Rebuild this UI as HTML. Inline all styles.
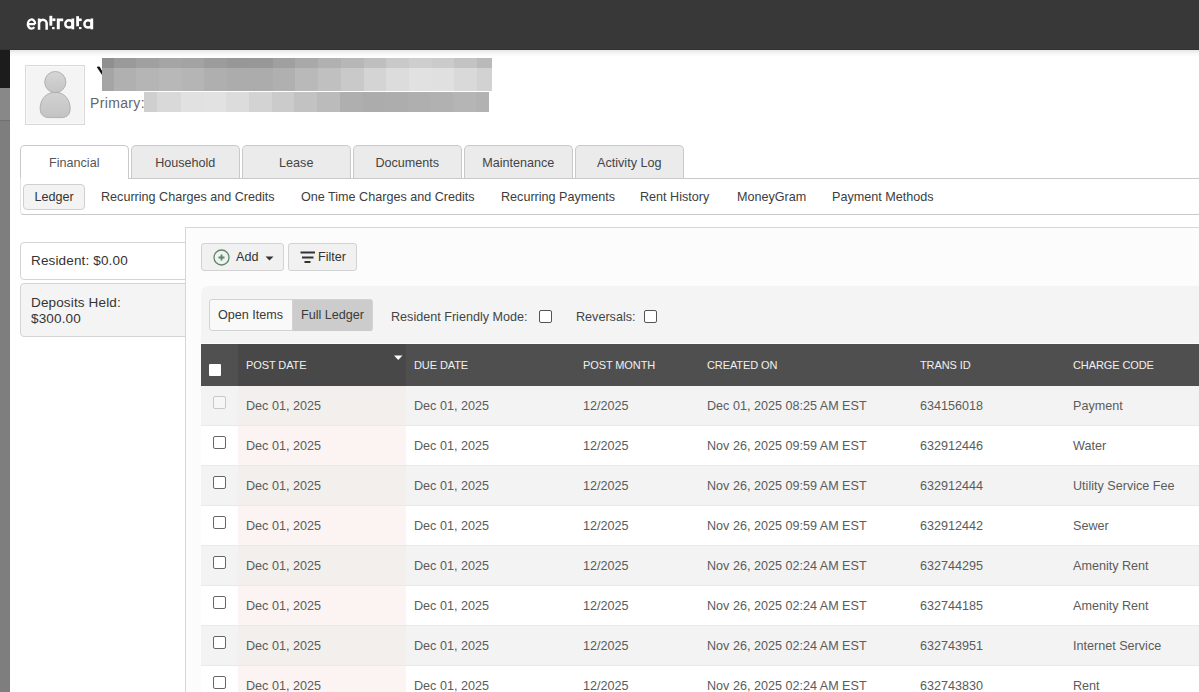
<!DOCTYPE html>
<html><head><meta charset="utf-8">
<style>
*{box-sizing:border-box;margin:0;padding:0}
html,body{width:1199px;height:692px;overflow:hidden;background:#fff;font-family:"Liberation Sans",sans-serif;color:#444}
.a{position:absolute}
#top{left:0;top:0;width:1199px;height:50px;background:#383838;border-bottom:1px solid #323232}
#strip1{left:0;top:50px;width:10px;height:38px;background:#1c1c1c}
#strip2{left:0;top:88px;width:10px;height:32px;background:#888}
#strip3{left:0;top:120px;width:10px;height:572px;background:#7e7e7e;border-top:1px solid #707070}
#panel{left:10px;top:50px;width:1189px;height:642px;background:#fff;background-image:linear-gradient(rgba(0,0,0,.1),rgba(0,0,0,.04) 3px,rgba(0,0,0,0) 7px)}
#avatar{left:25px;top:65px;width:60px;height:60px;background:#f4f4f4;border:1px solid #d9d9d9;box-shadow:inset 0 0 0 1px #f9f9f9}
.t{white-space:nowrap;font-size:12.6px;line-height:15px}
.tab{top:145px;height:34px;width:108.5px;background:#ebebeb;border:1px solid #c9c9c9;border-bottom:none;border-radius:5px 5px 0 0;text-align:center;font-size:12.6px;line-height:35px;color:#444}
.tab.act{background:#fff;color:#555;height:34px}
#subnav{left:20px;top:178px;width:1190px;height:37px;border-top:none;border-bottom:1px solid #c9c9c9;border-left:1px solid #e3e3e3;border-radius:0 0 0 4px}
#ledger{left:23px;top:184px;width:62px;height:26px;background:#f3f3f3;border:1px solid #cfcfcf;border-radius:4px;text-align:center;font-size:12.6px;line-height:24px;color:#333}
.sn{top:190px;font-size:12.6px;color:#3d3d3d}
.sum{left:20px;width:170px;border:1px solid #d4d4d4;border-radius:4px;font-size:13.5px;letter-spacing:.15px;color:#333;padding-left:10px}
#main{left:185px;top:227px;width:1020px;height:470px;background:#fcfcfc;border-left:1px solid #d6d6d6;border-top:1px solid #d6d6d6}
.btn{top:243px;height:28px;background:#f1f1f1;border:1px solid #d2d2d2;border-radius:3px;font-size:12.6px;color:#333}
#fbar{left:201px;top:286px;width:1010px;height:57px;background:#f4f4f4;border-radius:8px 0 0 0}
#seg{left:209px;top:299px;width:164px;height:32px;border:1px solid #d3d3d3;border-radius:3px;background:#f9f9f9;overflow:hidden}
#thead{left:201px;top:344px;width:1000px;height:42px;background:#4f4f4f}
.th{top:359px;font-size:11px;line-height:13px;color:#f0f0f0;letter-spacing:-0.1px;white-space:nowrap}
.row{left:201px;width:1000px;height:40px}
.td{font-size:12.6px;line-height:15px;color:#5b5b5b;white-space:nowrap}
.cb.dis{border-color:#c8c8c8;background:#f6f6f6}
.cb{width:13px;height:13px;border:1px solid #666;border-radius:2px;background:#fff}
</style></head><body>
<div class="a" id="top"></div>
<div class="a" id="strip1"></div>
<div class="a" id="strip2"></div>
<div class="a" id="strip3"></div>
<div class="a" id="panel"></div>
<div class="a" id="avatar"></div>
<svg class="a" style="left:90px;top:60px" width="14" height="20" viewBox="90 60 14 20"><path d="M96.9 67.3Q97.3 66.5 98.3 66.6L99.7 66.8L102.2 71.3L102.2 74.5L101.7 74.6Z" fill="#111"/></svg>
<div class="a" style="left:102px;top:58px;width:12px;height:10px;background:#8f8f8f"></div>
<div class="a" style="left:102px;top:68px;width:12px;height:23px;background:#a5a5a5"></div>
<div class="a" style="left:114px;top:58px;width:22px;height:10px;background:#9a9a9a"></div>
<div class="a" style="left:114px;top:68px;width:22px;height:23px;background:#b0b0b0"></div>
<div class="a" style="left:136px;top:58px;width:23px;height:10px;background:#a0a0a0"></div>
<div class="a" style="left:136px;top:68px;width:23px;height:23px;background:#b5b5b5"></div>
<div class="a" style="left:159px;top:58px;width:23px;height:10px;background:#a5a5a5"></div>
<div class="a" style="left:159px;top:68px;width:23px;height:23px;background:#b8b8b8"></div>
<div class="a" style="left:182px;top:58px;width:22px;height:10px;background:#a3a3a3"></div>
<div class="a" style="left:182px;top:68px;width:22px;height:23px;background:#b5b5b5"></div>
<div class="a" style="left:204px;top:58px;width:23px;height:10px;background:#9c9c9c"></div>
<div class="a" style="left:204px;top:68px;width:23px;height:23px;background:#afafaf"></div>
<div class="a" style="left:227px;top:58px;width:23px;height:10px;background:#979797"></div>
<div class="a" style="left:227px;top:68px;width:23px;height:23px;background:#acacac"></div>
<div class="a" style="left:250px;top:58px;width:23px;height:10px;background:#989898"></div>
<div class="a" style="left:250px;top:68px;width:23px;height:23px;background:#acacac"></div>
<div class="a" style="left:273px;top:58px;width:22px;height:10px;background:#a0a0a0"></div>
<div class="a" style="left:273px;top:68px;width:22px;height:23px;background:#b0b0b0"></div>
<div class="a" style="left:295px;top:58px;width:23px;height:10px;background:#a9a9a9"></div>
<div class="a" style="left:295px;top:68px;width:23px;height:23px;background:#b9b9b9"></div>
<div class="a" style="left:318px;top:58px;width:23px;height:10px;background:#b1b1b1"></div>
<div class="a" style="left:318px;top:68px;width:23px;height:23px;background:#c0c0c0"></div>
<div class="a" style="left:341px;top:58px;width:23px;height:10px;background:#b7b7b7"></div>
<div class="a" style="left:341px;top:68px;width:23px;height:23px;background:#c9c9c9"></div>
<div class="a" style="left:364px;top:58px;width:22px;height:10px;background:#bfbfbf"></div>
<div class="a" style="left:364px;top:68px;width:22px;height:23px;background:#d4d4d4"></div>
<div class="a" style="left:386px;top:58px;width:23px;height:10px;background:#c9c9c9"></div>
<div class="a" style="left:386px;top:68px;width:23px;height:23px;background:#dcdcdc"></div>
<div class="a" style="left:409px;top:58px;width:23px;height:10px;background:#cecece"></div>
<div class="a" style="left:409px;top:68px;width:23px;height:23px;background:#e1e1e1"></div>
<div class="a" style="left:432px;top:58px;width:22px;height:10px;background:#cbcbcb"></div>
<div class="a" style="left:432px;top:68px;width:22px;height:23px;background:#e0e0e0"></div>
<div class="a" style="left:454px;top:58px;width:23px;height:10px;background:#c3c3c3"></div>
<div class="a" style="left:454px;top:68px;width:23px;height:23px;background:#d9d9d9"></div>
<div class="a" style="left:477px;top:58px;width:15px;height:10px;background:#bababa"></div>
<div class="a" style="left:477px;top:68px;width:15px;height:23px;background:#d2d2d2"></div>
<div class="a" style="left:144px;top:92px;width:13px;height:20px;background:#cfcfcf"></div>
<div class="a" style="left:157px;top:92px;width:24px;height:20px;background:#d9d9d9"></div>
<div class="a" style="left:181px;top:92px;width:22px;height:20px;background:#e1e1e1"></div>
<div class="a" style="left:203px;top:92px;width:23px;height:20px;background:#e2e2e2"></div>
<div class="a" style="left:226px;top:92px;width:23px;height:20px;background:#dcdcdc"></div>
<div class="a" style="left:249px;top:92px;width:23px;height:20px;background:#d3d3d3"></div>
<div class="a" style="left:272px;top:92px;width:22px;height:20px;background:#cbcbcb"></div>
<div class="a" style="left:294px;top:92px;width:23px;height:20px;background:#c2c2c2"></div>
<div class="a" style="left:317px;top:92px;width:23px;height:20px;background:#bbbbbb"></div>
<div class="a" style="left:340px;top:92px;width:22px;height:20px;background:#afafaf"></div>
<div class="a" style="left:362px;top:92px;width:23px;height:20px;background:#acacac"></div>
<div class="a" style="left:385px;top:92px;width:23px;height:20px;background:#adadad"></div>
<div class="a" style="left:408px;top:92px;width:22px;height:20px;background:#afafaf"></div>
<div class="a" style="left:430px;top:92px;width:23px;height:20px;background:#b1b1b1"></div>
<div class="a" style="left:453px;top:92px;width:23px;height:20px;background:#b5b5b5"></div>
<div class="a" style="left:476px;top:92px;width:13px;height:20px;background:#b2b2b2"></div>
<div class="a" style="left:90px;top:95px;font-size:14px;line-height:16px;letter-spacing:.35px;color:#666;white-space:nowrap">Primary:</div>
<svg class="a" style="left:0;top:0" width="100" height="50" viewBox="0 0 100 50"><g fill="#fff">
<path d="M27.9 24.2H35.2M35.2 24.1A3.7 4.6 0 1 0 34.33 27.06" fill="none" stroke="#fff" stroke-width="2.2"/>
<path d="M39.05 29.8V18.6M39.05 29.8V23.6A3.8 3.9 0 0 1 46.65 23.6V29.8" fill="none" stroke="#fff" stroke-width="2.5"/>
<rect x="49.4" y="15.8" width="2.9" height="9.9"/><rect x="52.3" y="18.4" width="3.1" height="2.7"/><rect x="52.1" y="27" width="2.5" height="2.2"/>
<path d="M56.8 29.3V18.5H63.2V21.2H59.8V29.3Z"/>
<circle cx="69" cy="23.9" r="3.7" fill="none" stroke="#fff" stroke-width="2.5"/><rect x="71.4" y="18.5" width="2.8" height="10.8"/>
<rect x="76.2" y="16.2" width="2.8" height="10.1"/><rect x="79" y="18.5" width="2.7" height="2.6"/><rect x="79" y="27" width="2.5" height="2.1"/>
<circle cx="88.1" cy="23.9" r="3.7" fill="none" stroke="#fff" stroke-width="2.5"/><rect x="90.4" y="18.5" width="2.8" height="10.8"/>
</g></svg>
<svg class="a" style="left:25px;top:65px" width="60" height="60" viewBox="0 0 60 60">
<defs><linearGradient id="gh" x1="0" y1="0" x2="0" y2="1"><stop offset="0" stop-color="#d6d6d6"/><stop offset="1" stop-color="#c4c4c4"/></linearGradient>
<linearGradient id="gb" x1="0" y1="0" x2="0" y2="1"><stop offset="0" stop-color="#d2d2d2"/><stop offset="1" stop-color="#c3c3c3"/></linearGradient></defs>
<path d="M30.2 27.2C38 27.2 44.5 33 45.1 42C45.5 48 43.5 52.6 36 52.6H24.5C17 52.6 14.8 48 15.2 42C15.8 33 22.4 27.2 30.2 27.2Z" fill="url(#gb)" stroke="#ababab" stroke-width="0.9"/>
<circle cx="30.3" cy="17.1" r="10.6" fill="url(#gh)" stroke="#acacac" stroke-width="0.9"/>
</svg>

<div class="a tab act" style="left:20px">Financial</div>
<div class="a tab" style="left:131px">Household</div>
<div class="a tab" style="left:242px">Lease</div>
<div class="a tab" style="left:353px">Documents</div>
<div class="a tab" style="left:464px">Maintenance</div>
<div class="a tab" style="left:575px">Activity Log</div>

<div class="a" id="subnav"></div>
<div class="a" style="left:128px;top:178px;width:1071px;height:1px;background:#c9c9c9"></div>
<div class="a" id="ledger">Ledger</div>
<div class="a sn t" style="left:101px">Recurring Charges and Credits</div>
<div class="a sn t" style="left:301px">One Time Charges and Credits</div>
<div class="a sn t" style="left:501px">Recurring Payments</div>
<div class="a sn t" style="left:640px">Rent History</div>
<div class="a sn t" style="left:737px">MoneyGram</div>
<div class="a sn t" style="left:832px">Payment Methods</div>

<div class="a sum" style="top:242px;height:38px;line-height:36px;background:#fff">Resident: $0.00</div>
<div class="a sum" style="top:283px;height:54px;background:#f4f4f4;padding-top:11px;line-height:16px">Deposits Held:<br>$300.00</div>

<div class="a" id="main"></div>
<div class="a btn" style="left:201px;width:83px"></div>
<div class="a btn" style="left:288px;width:69px"></div>
<div class="a" id="fbar"></div>
<div class="a" id="seg"></div>
<div class="a" id="thead"></div>

<!-- buttons -->
<svg class="a" style="left:213px;top:249.3px" width="17" height="17" viewBox="0 0 17 17"><circle cx="8.5" cy="8.5" r="7.5" fill="none" stroke="#5b8a6b" stroke-width="1.3"/><path d="M8.5 5.5v6M5.5 8.5h6" stroke="#5b8a6b" stroke-width="1.8"/></svg>
<div class="a t" style="left:236px;top:250px;color:#333">Add</div>
<svg class="a" style="left:264.5px;top:256px" width="9" height="5" viewBox="0 0 9 5"><path d="M0.5 0.5h8L4.5 4.5z" fill="#333"/></svg>
<svg class="a" style="left:300px;top:250px" width="16" height="15" viewBox="0 0 16 15"><path d="M0.5 2.5h14.5M2 7.5h11.5M4.5 12h6" stroke="#333" stroke-width="1.8"/></svg>
<div class="a t" style="left:318px;top:250px;color:#333">Filter</div>

<div class="a" style="left:292px;top:300px;width:80px;height:31px;background:#cccccc"></div>
<div class="a" style="left:292px;top:300px;width:1px;height:31px;background:#d3d3d3"></div>
<div class="a t" style="left:218px;top:308px;color:#3a3a3a">Open Items</div>
<div class="a t" style="left:301px;top:308px;color:#3a3a3a">Full Ledger</div>
<div class="a t" style="left:391px;top:310px;color:#444">Resident Friendly Mode:</div>
<div class="a cb" style="left:539px;top:310px;border-color:#555"></div>
<div class="a t" style="left:576px;top:310px;color:#444">Reversals:</div>
<div class="a cb" style="left:644px;top:310px;border-color:#555"></div>

<div class="a" style="left:201px;top:344px;width:37px;height:42px;background:#505050"></div>
<div class="a" style="left:238px;top:344px;width:168px;height:42px;background:#484848"></div>
<div class="a" style="left:209px;top:364px;width:12px;height:12px;background:#fff;border-radius:1px"></div>
<svg class="a" style="left:394px;top:355px" width="9" height="6" viewBox="0 0 9 6"><path d="M0 0.5h8.5L4.25 5z" fill="#fff"/></svg>
<div class="a th" style="left:246px">POST DATE</div>
<div class="a th" style="left:414px">DUE DATE</div>
<div class="a th" style="left:583px">POST MONTH</div>
<div class="a th" style="left:707px">CREATED ON</div>
<div class="a th" style="left:920px">TRANS ID</div>
<div class="a th" style="left:1073px">CHARGE CODE</div>
<div class="a row" style="top:386px;background:#f3f3f3"></div>
<div class="a" style="left:238px;top:386px;width:168px;height:40px;background:#f3efec"></div>
<div class="a cb dis" style="left:213px;top:396px"></div>
<div class="a td" style="left:246px;top:399px">Dec 01, 2025</div>
<div class="a td" style="left:414px;top:399px">Dec 01, 2025</div>
<div class="a td" style="left:583px;top:399px">12/2025</div>
<div class="a td" style="left:707px;top:399px">Dec 01, 2025 08:25 AM EST</div>
<div class="a td" style="left:920px;top:399px">634156018</div>
<div class="a td" style="left:1073px;top:399px">Payment</div>
<div class="a row" style="top:426px;background:#ffffff"></div>
<div class="a" style="left:238px;top:426px;width:168px;height:40px;background:#fcf4f2"></div>
<div class="a cb" style="left:213px;top:436px"></div>
<div class="a td" style="left:246px;top:439px">Dec 01, 2025</div>
<div class="a td" style="left:414px;top:439px">Dec 01, 2025</div>
<div class="a td" style="left:583px;top:439px">12/2025</div>
<div class="a td" style="left:707px;top:439px">Nov 26, 2025 09:59 AM EST</div>
<div class="a td" style="left:920px;top:439px">632912446</div>
<div class="a td" style="left:1073px;top:439px">Water</div>
<div class="a row" style="top:466px;background:#f3f3f3"></div>
<div class="a" style="left:238px;top:466px;width:168px;height:40px;background:#f3efec"></div>
<div class="a cb" style="left:213px;top:476px"></div>
<div class="a td" style="left:246px;top:479px">Dec 01, 2025</div>
<div class="a td" style="left:414px;top:479px">Dec 01, 2025</div>
<div class="a td" style="left:583px;top:479px">12/2025</div>
<div class="a td" style="left:707px;top:479px">Nov 26, 2025 09:59 AM EST</div>
<div class="a td" style="left:920px;top:479px">632912444</div>
<div class="a td" style="left:1073px;top:479px">Utility Service Fee</div>
<div class="a row" style="top:506px;background:#ffffff"></div>
<div class="a" style="left:238px;top:506px;width:168px;height:40px;background:#fcf4f2"></div>
<div class="a cb" style="left:213px;top:516px"></div>
<div class="a td" style="left:246px;top:519px">Dec 01, 2025</div>
<div class="a td" style="left:414px;top:519px">Dec 01, 2025</div>
<div class="a td" style="left:583px;top:519px">12/2025</div>
<div class="a td" style="left:707px;top:519px">Nov 26, 2025 09:59 AM EST</div>
<div class="a td" style="left:920px;top:519px">632912442</div>
<div class="a td" style="left:1073px;top:519px">Sewer</div>
<div class="a row" style="top:546px;background:#f3f3f3"></div>
<div class="a" style="left:238px;top:546px;width:168px;height:40px;background:#f3efec"></div>
<div class="a cb" style="left:213px;top:556px"></div>
<div class="a td" style="left:246px;top:559px">Dec 01, 2025</div>
<div class="a td" style="left:414px;top:559px">Dec 01, 2025</div>
<div class="a td" style="left:583px;top:559px">12/2025</div>
<div class="a td" style="left:707px;top:559px">Nov 26, 2025 02:24 AM EST</div>
<div class="a td" style="left:920px;top:559px">632744295</div>
<div class="a td" style="left:1073px;top:559px">Amenity Rent</div>
<div class="a row" style="top:586px;background:#ffffff"></div>
<div class="a" style="left:238px;top:586px;width:168px;height:40px;background:#fcf4f2"></div>
<div class="a cb" style="left:213px;top:596px"></div>
<div class="a td" style="left:246px;top:599px">Dec 01, 2025</div>
<div class="a td" style="left:414px;top:599px">Dec 01, 2025</div>
<div class="a td" style="left:583px;top:599px">12/2025</div>
<div class="a td" style="left:707px;top:599px">Nov 26, 2025 02:24 AM EST</div>
<div class="a td" style="left:920px;top:599px">632744185</div>
<div class="a td" style="left:1073px;top:599px">Amenity Rent</div>
<div class="a row" style="top:626px;background:#f3f3f3"></div>
<div class="a" style="left:238px;top:626px;width:168px;height:40px;background:#f3efec"></div>
<div class="a cb" style="left:213px;top:636px"></div>
<div class="a td" style="left:246px;top:639px">Dec 01, 2025</div>
<div class="a td" style="left:414px;top:639px">Dec 01, 2025</div>
<div class="a td" style="left:583px;top:639px">12/2025</div>
<div class="a td" style="left:707px;top:639px">Nov 26, 2025 02:24 AM EST</div>
<div class="a td" style="left:920px;top:639px">632743951</div>
<div class="a td" style="left:1073px;top:639px">Internet Service</div>
<div class="a row" style="top:666px;background:#ffffff"></div>
<div class="a" style="left:238px;top:666px;width:168px;height:40px;background:#fcf4f2"></div>
<div class="a cb" style="left:213px;top:676px"></div>
<div class="a td" style="left:246px;top:679px">Dec 01, 2025</div>
<div class="a td" style="left:414px;top:679px">Dec 01, 2025</div>
<div class="a td" style="left:583px;top:679px">12/2025</div>
<div class="a td" style="left:707px;top:679px">Nov 26, 2025 02:24 AM EST</div>
<div class="a td" style="left:920px;top:679px">632743830</div>
<div class="a td" style="left:1073px;top:679px">Rent</div>
<div class="a" style="left:201px;top:425px;width:1000px;height:1px;background:#e9e9e9"></div>
<div class="a" style="left:201px;top:465px;width:1000px;height:1px;background:#e9e9e9"></div>
<div class="a" style="left:201px;top:505px;width:1000px;height:1px;background:#e9e9e9"></div>
<div class="a" style="left:201px;top:545px;width:1000px;height:1px;background:#e9e9e9"></div>
<div class="a" style="left:201px;top:585px;width:1000px;height:1px;background:#e9e9e9"></div>
<div class="a" style="left:201px;top:625px;width:1000px;height:1px;background:#e9e9e9"></div>
<div class="a" style="left:201px;top:665px;width:1000px;height:1px;background:#e9e9e9"></div>
</body></html>
